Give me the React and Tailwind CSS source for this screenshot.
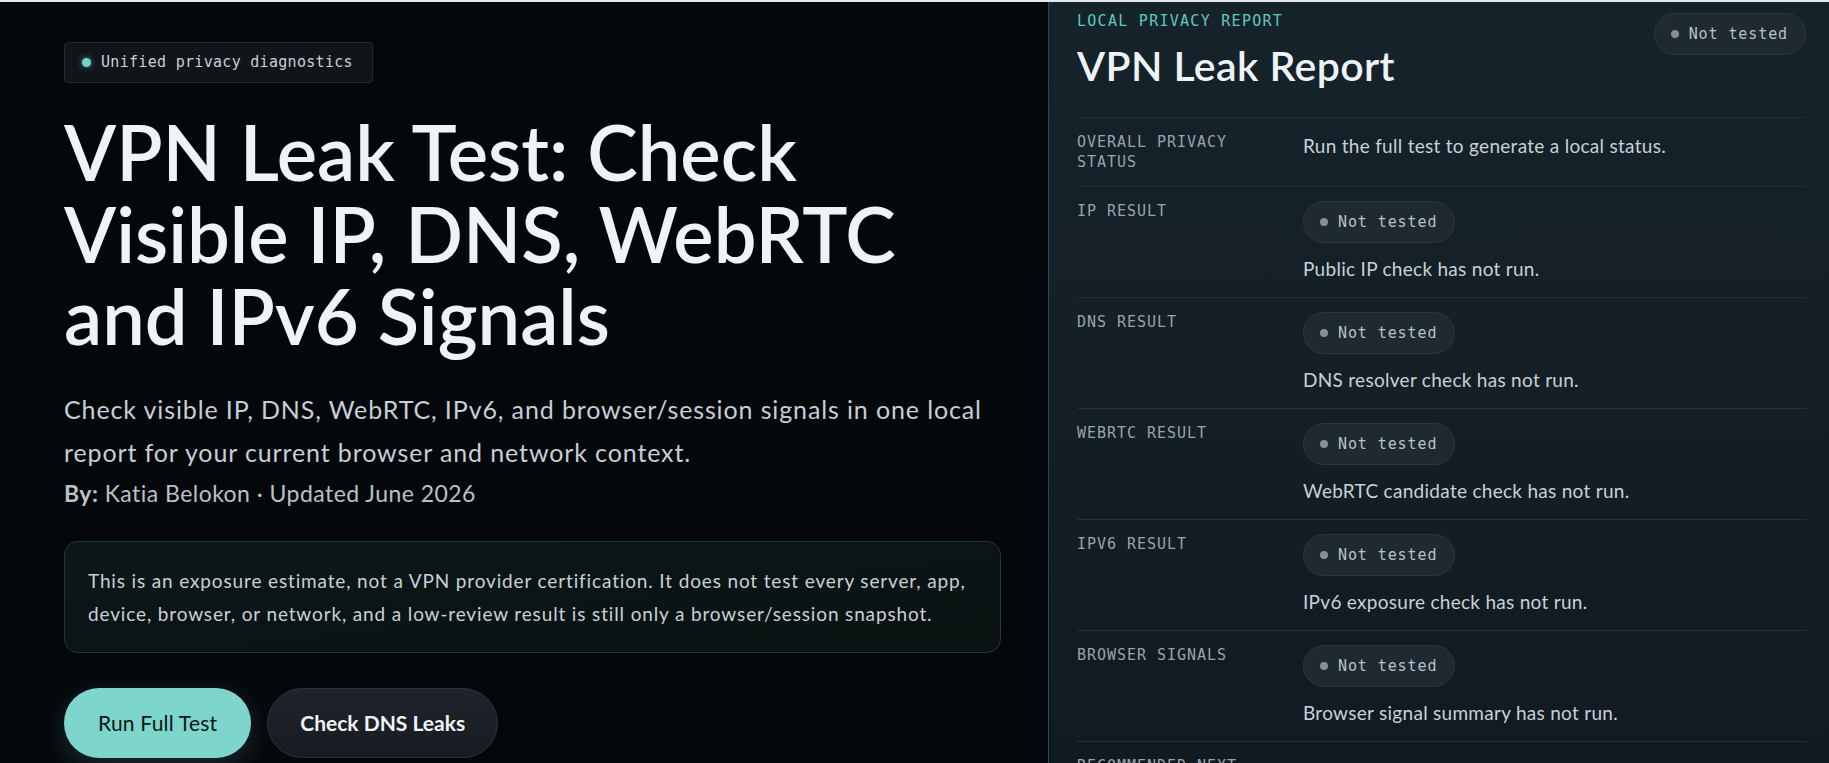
import React from "react";

const sans = { fontFamily: "Lato, 'Noto Sans', sans-serif" };
const mono = { fontFamily: "'DejaVu Sans Mono', 'Liberation Mono', monospace" };

const rows = [
  { label: "IP RESULT", text: "Public IP check has not run." },
  { label: "DNS RESULT", text: "DNS resolver check has not run." },
  { label: "WEBRTC RESULT", text: "WebRTC candidate check has not run." },
  { label: "IPV6 RESULT", text: "IPv6 exposure check has not run." },
  { label: "BROWSER SIGNALS", text: "Browser signal summary has not run." },
];

const StatusPill = () => (
  <span
    className="inline-flex h-[42px] items-center gap-[10px] rounded-full border border-[#2b363d] bg-[#1e2930] pl-[16px] pr-[17px] text-[15px] leading-5 tracking-[0.06em] text-[#b9c2ca]"
    style={mono}
  >
    <span className="h-2 w-2 rounded-full bg-[#87909a]" />
    Not tested
  </span>
);

const RowLabel = ({ children }) => (
  <div
    className="text-[15px] leading-5 tracking-[0.065em] text-[#9aa3ac]"
    style={mono}
  >
    {children}
  </div>
);

const RowText = ({ children }) => (
  <div className="text-[19px] leading-[28px] tracking-[0.015em] text-[#c8d0d8]">{children}</div>
);

export default function App() {
  return (
    <div className="flex h-[763px] flex-col overflow-hidden bg-[#05080b]" style={sans}>
      <div className="h-[2px] shrink-0 bg-[#e4e7eb]" />
      <div className="flex min-h-0 flex-1">
        {/* left: intro */}
        <section className="w-[1048px] shrink-0 pl-16 pr-[47px] pt-10">
          <div
            className="inline-flex h-[41px] items-center gap-[10px] rounded-[4px] border border-[#262b31] bg-[#111419] pl-[17px] pr-[19px] text-[15px] tracking-[0.02em] text-[#c8d0d8]"
            style={mono}
          >
            <span className="h-[9px] w-[9px] rounded-full bg-[#6ed6cb] shadow-[0_0_6px_rgba(110,214,203,0.6)]" />
            Unified privacy diagnostics
          </div>

          <h1 className="mt-[28px] text-[76px] font-semibold leading-[82px] text-[#eef3f8]">
            VPN Leak Test: Check Visible IP, DNS, WebRTC and IPv6 Signals
          </h1>

          <p className="mt-[31px] text-[25px] leading-[43px] tracking-[0.035em] text-[#c6ced6]">
            Check visible IP, DNS, WebRTC, IPv6, and browser/session signals in one local report for your current browser and network context.
          </p>
          <p className="mt-[3px] text-[23px] leading-[33px] tracking-[0.02em] text-[#b9c1c9]">
            <span className="font-bold">By:</span> Katia Belokon · Updated June 2026
          </p>

          <div className="mt-[31px] rounded-[14px] border border-[#253634] bg-gradient-to-br from-[#0d1717] to-[#0a1212] px-[23px] py-[22px] text-[19px] leading-[33px] tracking-[0.045em] text-[#c8d0d8]">
            This is an exposure estimate, not a VPN provider certification. It does not test every server, app, device, browser, or network, and a low-review result is still only a browser/session snapshot.
          </div>

          <div className="mt-[35px] flex gap-4">
            <button className="h-[70px] rounded-full bg-[#7dd5cc] px-[34px] text-[21px] tracking-[0.01em] text-[#0b1716] shadow-[0_8px_28px_rgba(125,213,204,0.18)]">
              Run Full Test
            </button>
            <button className="h-[70px] rounded-full border border-[#2d323a] bg-gradient-to-b from-[#1f232b] to-[#181b21] px-[32px] text-[21px] font-bold text-[#f1f4f7]">
              Check DNS Leaks
            </button>
          </div>
        </section>

        {/* right: report */}
        <aside className="flex-1 border-l border-[#2a4b4e] bg-gradient-to-b from-[#16232a] to-[#121a21] pl-[28px] pr-[23px] pt-[9px]">
          <div className="flex items-start justify-between">
            <div>
              <div
                className="text-[15px] leading-5 tracking-[0.085em] text-[#5fc9be]"
                style={mono}
              >
                LOCAL PRIVACY REPORT
              </div>
              <h2 className="mt-[11px] text-[41px] font-semibold leading-[48px] tracking-[0.01em] text-[#eef3f8]">
                VPN Leak Report
              </h2>
            </div>
            <div className="mt-[2px]">
              <StatusPill />
            </div>
          </div>

          <div className="mt-[27px]">
            <div className="grid grid-cols-[200px_1fr] gap-x-[26px] border-t border-[#243038] py-[14px]">
              <RowLabel>OVERALL PRIVACY STATUS</RowLabel>
              <RowText>Run the full test to generate a local status.</RowText>
            </div>
            {rows.map((r) => (
              <div
                key={r.label}
                className="grid grid-cols-[200px_1fr] gap-x-[26px] border-t border-[#243038] py-[14px]"
              >
                <RowLabel>{r.label}</RowLabel>
                <div className="flex flex-col items-start gap-[12px]">
                  <StatusPill />
                  <RowText>{r.text}</RowText>
                </div>
              </div>
            ))}
            <div className="grid grid-cols-[200px_1fr] gap-x-[26px] border-t border-[#243038] py-[14px]">
              <RowLabel>RECOMMENDED NEXT STEP</RowLabel>
              <RowText>Run the full test to get a local recommendation.</RowText>
            </div>
          </div>
        </aside>
      </div>
    </div>
  );
}
